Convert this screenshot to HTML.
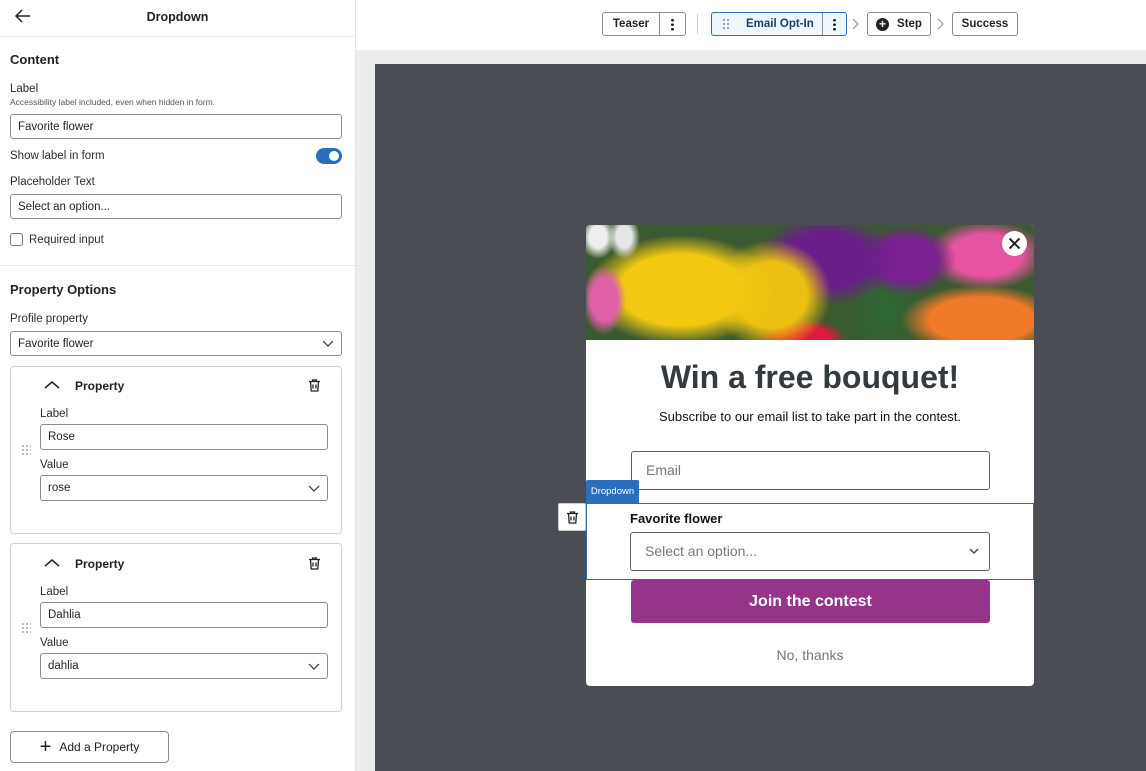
<!DOCTYPE html>
<html><head><style>
*{box-sizing:border-box;margin:0;padding:0}
body{width:1146px;height:771px;overflow:hidden;font-family:"Liberation Sans",sans-serif;color:#1f2124;background:#ebecee;position:relative;font-size:11px}
.abs{position:absolute}
.panel{left:0;top:0;width:356px;height:771px;background:#fff;border-right:1px solid #e3e4e6}
.inp{position:absolute;border:1px solid #8a8d91;border-radius:3px;background:#fff;font-size:11.5px;padding-left:7px;display:flex;align-items:center;color:#1f2124}
.lbl{position:absolute;font-size:11.5px;color:#2b2d30}
.h{position:absolute;font-size:13px;font-weight:bold;color:#1f2124}
.card{position:absolute;left:10px;width:332px;border:1px solid #cfd1d4;border-radius:4px}
.btn{position:absolute;border:1px solid #8a8d91;border-radius:3px;background:#fff;font-size:11.5px;font-weight:600;display:flex;align-items:center;justify-content:center;height:24px;top:12px}
.dots{display:inline-block;width:3px;height:13px;background:radial-gradient(circle,#222 1.3px,transparent 1.5px) 0 0/3px 4.5px repeat-y}
</style></head><body>
<div class="abs panel">
  <svg class="abs" style="left:14px;top:9px" width="18" height="14" viewBox="0 0 18 14"><path d="M8 1L2 7l6 6M2 7h14" stroke="#222" stroke-width="1.5" fill="none"/></svg>
  <div class="abs" style="left:0;width:355px;top:10px;text-align:center;font-size:12.5px;font-weight:bold;color:#222">Dropdown</div>
  <div class="abs" style="left:0;top:36px;width:355px;height:1px;background:#e6e7e9"></div>
  <div class="h" style="left:10px;top:52px">Content</div>
  <div class="lbl" style="left:10px;top:83px">Label</div>
  <div class="lbl" style="left:10px;top:97px;font-size:8.5px;color:#555">Accessibility label included, even when hidden in form.</div>
  <div class="inp" style="left:10px;top:114px;width:332px;height:25px">Favorite flower</div>
  <div class="lbl" style="left:10px;top:150px">Show label in form</div>
  <div class="abs" style="left:316px;top:148px;width:26px;height:16px;border-radius:8px;background:#2a6fbd"><div class="abs" style="right:3px;top:3px;width:10px;height:10px;border-radius:50%;background:#fff"></div></div>
  <div class="lbl" style="left:10px;top:176px">Placeholder Text</div>
  <div class="inp" style="left:10px;top:194px;width:332px;height:25px">Select an option...</div>
  <div class="abs" style="left:10px;top:233px;width:13px;height:13px;border:1px solid #777;border-radius:3px"></div>
  <div class="lbl" style="left:29px;top:234px">Required input</div>
  <div class="abs" style="left:0;top:265px;width:355px;height:1px;background:#e6e7e9"></div>
  <div class="h" style="left:10px;top:282px">Property Options</div>
  <div class="lbl" style="left:10px;top:313px">Profile property</div>
  <div class="inp" style="left:10px;top:331px;width:332px;height:25px">Favorite flower
    <svg class="abs" style="right:7px;top:8px" width="12" height="8"><path d="M1 1l5 5 5-5" stroke="#333" stroke-width="1.2" fill="none"/></svg></div>

  <div class="card" style="top:366px;height:168px"></div>
  <svg class="abs" style="left:44px;top:380px" width="16" height="10"><path d="M1 8l7-6 7 6" stroke="#222" stroke-width="1.5" fill="none"/></svg>
  <div class="abs" style="left:75px;top:379px;font-size:12px;font-weight:bold">Property</div>
  <svg class="abs" style="left:307px;top:378px" width="15" height="15" viewBox="0 0 15 15"><path d="M2 3.5h11M5.5 3.5V2h4v1.5M3.5 3.5l.7 9.5h6.6l.7-9.5M6 6.5v4M9 6.5v4" stroke="#222" stroke-width="1.3" fill="none"/></svg>
  <div class="lbl" style="left:40px;top:408px">Label</div>
  <div class="inp" style="left:40px;top:424px;width:288px;height:26px">Rose</div>
  <div class="abs" style="left:21px;top:444px;width:10px;height:12px;background:radial-gradient(circle,#bbb 1px,transparent 1.3px) 0 0/4px 4px"></div>
  <div class="lbl" style="left:40px;top:459px">Value</div>
  <div class="inp" style="left:40px;top:475px;width:288px;height:26px">rose<svg class="abs" style="right:7px;top:9px" width="12" height="8"><path d="M1 1l5 5 5-5" stroke="#333" stroke-width="1.2" fill="none"/></svg></div>

  <div class="card" style="top:543px;height:169px"></div>
  <svg class="abs" style="left:44px;top:558px" width="16" height="10"><path d="M1 8l7-6 7 6" stroke="#222" stroke-width="1.5" fill="none"/></svg>
  <div class="abs" style="left:75px;top:557px;font-size:12px;font-weight:bold">Property</div>
  <svg class="abs" style="left:307px;top:556px" width="15" height="15" viewBox="0 0 15 15"><path d="M2 3.5h11M5.5 3.5V2h4v1.5M3.5 3.5l.7 9.5h6.6l.7-9.5M6 6.5v4M9 6.5v4" stroke="#222" stroke-width="1.3" fill="none"/></svg>
  <div class="lbl" style="left:40px;top:586px">Label</div>
  <div class="inp" style="left:40px;top:602px;width:288px;height:26px">Dahlia</div>
  <div class="abs" style="left:21px;top:622px;width:10px;height:12px;background:radial-gradient(circle,#bbb 1px,transparent 1.3px) 0 0/4px 4px"></div>
  <div class="lbl" style="left:40px;top:637px">Value</div>
  <div class="inp" style="left:40px;top:653px;width:288px;height:26px">dahlia<svg class="abs" style="right:7px;top:9px" width="12" height="8"><path d="M1 1l5 5 5-5" stroke="#333" stroke-width="1.2" fill="none"/></svg></div>

  <div class="abs" style="left:10px;top:731px;width:159px;height:32px;border:1px solid #8a8d91;border-radius:4px;display:flex;align-items:center;justify-content:center;font-size:12px;color:#222"><span style="font-size:20px;font-weight:300;margin-right:8px;line-height:1">+</span>Add a Property</div>
</div>

<div class="abs" style="left:356px;top:0;width:790px;height:50px;background:#fff"></div>
<div class="btn" style="left:602px;width:84px;justify-content:flex-start"><span style="width:57px;text-align:center;border-right:1px solid #8a8d91;height:22px;line-height:22px">Teaser</span><span class="dots" style="margin-left:11px"></span></div>
<div class="abs" style="left:697px;top:14px;width:1px;height:20px;background:#ccc"></div>
<div class="btn" style="left:711px;width:136px;justify-content:flex-start;border-color:#2a6fbd;background:#eef7fd;color:#1d3f6b"><span style="width:111px;height:22px;border-right:1px solid #8a8d91;display:flex;align-items:center"><span style="margin-left:10px;width:7px;height:12px;background:radial-gradient(circle,#999 1px,transparent 1.2px) 0 0/4px 4px"></span><span style="margin-left:17px">Email Opt-In</span></span><span class="dots" style="margin-left:10px"></span></div>
<svg class="abs" style="left:852px;top:18px" width="8" height="12"><path d="M1 1l5 5-5 5" stroke="#888" fill="none"/></svg>
<div class="btn" style="left:867px;width:64px"><span style="display:inline-block;width:13px;height:13px;border-radius:50%;background:#222;color:#fff;font-size:12px;line-height:13px;text-align:center;margin-right:8px">+</span>Step</div>
<svg class="abs" style="left:937px;top:18px" width="8" height="12"><path d="M1 1l5 5-5 5" stroke="#888" fill="none"/></svg>
<div class="btn" style="left:952px;width:66px">Success</div>

<div class="abs" style="left:375px;top:64px;width:771px;height:707px;background:#4a4e54"></div>

<div class="abs" style="left:586px;top:225px;width:448px;height:461px;background:#fff;border-radius:4px;overflow:hidden">
  <div class="abs" style="left:0;top:0;width:448px;height:115px;background:
   radial-gradient(ellipse 22px 35px at 18px 75px,#e060a8 60%,transparent),
   radial-gradient(ellipse 18px 22px at 12px 12px,#eee 50%,transparent),
   radial-gradient(ellipse 16px 22px at 38px 12px,#e6e6e6 50%,transparent),
   radial-gradient(ellipse 95px 55px at 95px 65px,#f2c812 65%,transparent),
   radial-gradient(ellipse 60px 55px at 185px 70px,#ecc010 60%,transparent),
   radial-gradient(ellipse 70px 45px at 240px 35px,#6a1e8a 60%,transparent),
   radial-gradient(ellipse 50px 35px at 320px 35px,#7a2090 60%,transparent),
   radial-gradient(ellipse 60px 35px at 400px 30px,#e653a0 60%,transparent),
   radial-gradient(ellipse 80px 35px at 395px 95px,#f07a2a 65%,transparent),
   radial-gradient(ellipse 45px 18px at 215px 112px,#e01a3a 60%,transparent),
   radial-gradient(ellipse 40px 50px at 300px 85px,#2d6a35,transparent),
   #3a5a30"></div>
  <div class="abs" style="left:416px;top:6px;width:25px;height:25px;border-radius:50%;background:#fff"><svg width="25" height="25"><path d="M7.5 7.5l10 10M17.5 7.5l-10 10" stroke="#222" stroke-width="2"/></svg></div>
  <div class="abs" style="left:0;top:134px;width:448px;text-align:center;font-size:32px;font-weight:bold;color:#333a40">Win a free bouquet!</div>
  <div class="abs" style="left:0;top:184px;width:448px;text-align:center;font-size:13px;color:#111">Subscribe to our email list to take part in the contest.</div>
  <div class="abs" style="left:45px;top:226px;width:359px;height:39px;border:1px solid #5a6068;border-radius:3px;font-size:14px;color:#777;padding-left:14px;line-height:37px">Email</div>
  <div class="abs" style="left:0;top:278px;width:448px;height:77px;border:1px solid #2a6fa0"></div>
  <div class="abs" style="left:44px;top:286px;font-size:13px;font-weight:bold;color:#111">Favorite flower</div>
  <div class="abs" style="left:44px;top:307px;width:360px;height:39px;border:1px solid #5a6068;border-radius:3px;font-size:14px;color:#777;padding-left:14px;line-height:37px">Select an option...<svg class="abs" style="right:10px;top:15px" width="10" height="7"><path d="M1 1l4 4 4-4" stroke="#444" stroke-width="1.5" fill="none"/></svg></div>
  <div class="abs" style="left:45px;top:355px;width:359px;height:43px;background:#96348a;border-radius:3px;color:#fff;font-size:16px;font-weight:bold;text-align:center;line-height:43px">Join the contest</div>
  <div class="abs" style="left:0;top:422px;width:448px;text-align:center;font-size:14px;color:#777">No, thanks</div>
</div>
<div class="abs" style="left:586px;top:480px;width:53px;height:23px;background:#2a6fbd;color:#fff;font-size:9.5px;line-height:23px;text-align:center;border-radius:2px 2px 0 0">Dropdown</div>
<div class="abs" style="left:558px;top:503px;width:28px;height:28px;background:#fff;border:1px solid #ccc;border-radius:2px"><svg class="abs" style="left:6px;top:6px" width="15" height="15" viewBox="0 0 15 15"><path d="M2 3.5h11M5.5 3.5V2h4v1.5M3.5 3.5l.7 9.5h6.6l.7-9.5M6 6.5v4M9 6.5v4" stroke="#222" stroke-width="1.3" fill="none"/></svg></div>
</body></html>
